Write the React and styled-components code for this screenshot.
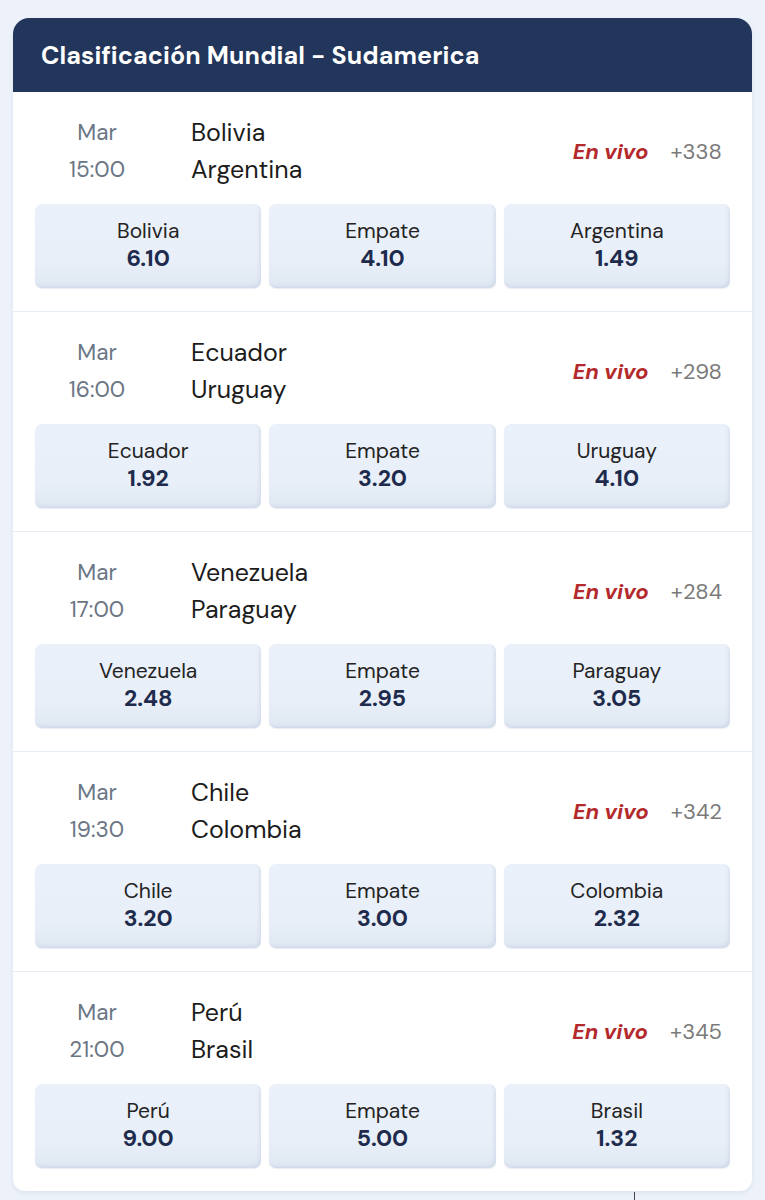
import React from "react";
import styled, { createGlobalStyle } from "styled-components";

const Global = createGlobalStyle`
  html, body { margin: 0; padding: 0; }
  body {
    background: #edf2fa;
    font-family: "DM Sans", Inter, "Noto Sans", sans-serif;
    -webkit-font-smoothing: antialiased;
  }
`;

const Page = styled.div`
  padding: 18px 13px 0;
  min-height: 1200px;
  box-sizing: border-box;
  position: relative;
`;

const Card = styled.section`
  background: #ffffff;
  border-radius: 16px 16px 12px 12px;
  overflow: hidden;
  box-shadow: 0 2px 4px rgba(30, 50, 90, 0.08);
`;

const Header = styled.header`
  height: 74px;
  background: #22355a;
  display: flex;
  align-items: center;
  padding: 0 28px;
  box-sizing: border-box;
`;

const Title = styled.h1`
  margin: 0;
  color: #ffffff;
  font-size: 25px;
  font-weight: 700;
  letter-spacing: 0.1px;
`;

const Match = styled.article`
  padding: 22px 22px 23px;
  border-bottom: ${(p) => (p.$last ? "none" : "1px solid #e6ecf4")};
  display: flex;
  flex-direction: column;
  gap: 16px;
`;

const Info = styled.div`
  display: flex;
  align-items: center;
  height: 74px;
`;

const When = styled.div`
  width: 124px;
  display: flex;
  flex-direction: column;
  align-items: center;
  color: #6b7685;
  font-size: 22.5px;
  line-height: 37px;
`;

const Teams = styled.div`
  margin-left: 32px;
  display: flex;
  flex-direction: column;
  color: #1c1c1c;
  font-size: 25px;
  line-height: 37px;
  flex: 1;
`;

const Live = styled.span`
  color: #b42a2c;
  font-style: italic;
  font-weight: 700;
  font-size: 22px;
`;

const Count = styled.span`
  color: #7a7a7a;
  font-size: 22px;
  margin-left: 22px;
  margin-right: 8px;
`;

const Odds = styled.div`
  display: grid;
  grid-template-columns: repeat(3, 1fr);
  gap: 8px;
`;

const OddButton = styled.button`
  height: 84px;
  border: none;
  border-radius: 7px;
  background: linear-gradient(180deg, #ebf1fa 0%, #e8eff8 70%, #dfe7f2 100%);
  box-shadow: inset -2px -2px 3px rgba(170, 185, 210, 0.25), 0 1px 1px rgba(170, 185, 210, 0.25);
  display: flex;
  flex-direction: column;
  align-items: center;
  justify-content: center;
  font-family: inherit;
  padding: 0 0 2px;
  cursor: pointer;
`;

const OddLabel = styled.span`
  font-size: 21px;
  color: #232323;
  line-height: 26px;
`;

const OddValue = styled.span`
  font-size: 23px;
  font-weight: 700;
  color: #1e2b4d;
  line-height: 28px;
`;

const Caret = styled.div`
  position: absolute;
  left: 634px;
  bottom: 0;
  width: 1px;
  height: 8px;
  background: #444;
`;

const matches = [
  { time: "15:00", home: "Bolivia", away: "Argentina", count: "+338", odds: ["6.10", "4.10", "1.49"] },
  { time: "16:00", home: "Ecuador", away: "Uruguay", count: "+298", odds: ["1.92", "3.20", "4.10"] },
  { time: "17:00", home: "Venezuela", away: "Paraguay", count: "+284", odds: ["2.48", "2.95", "3.05"] },
  { time: "19:30", home: "Chile", away: "Colombia", count: "+342", odds: ["3.20", "3.00", "2.32"] },
  { time: "21:00", home: "Perú", away: "Brasil", count: "+345", odds: ["9.00", "5.00", "1.32"] },
];

export default function App() {
  return (
    <>
      <Global />
      <Page>
        <Card>
          <Header>
            <Title>Clasificación Mundial - Sudamerica</Title>
          </Header>
          {matches.map((m, i) => (
            <Match key={m.home} $last={i === matches.length - 1}>
              <Info>
                <When>
                  <span>Mar</span>
                  <span>{m.time}</span>
                </When>
                <Teams>
                  <span>{m.home}</span>
                  <span>{m.away}</span>
                </Teams>
                <Live>En vivo</Live>
                <Count>{m.count}</Count>
              </Info>
              <Odds>
                {[m.home, "Empate", m.away].map((label, j) => (
                  <OddButton key={label + j}>
                    <OddLabel>{label}</OddLabel>
                    <OddValue>{m.odds[j]}</OddValue>
                  </OddButton>
                ))}
              </Odds>
            </Match>
          ))}
        </Card>
        <Caret />
      </Page>
    </>
  );
}
